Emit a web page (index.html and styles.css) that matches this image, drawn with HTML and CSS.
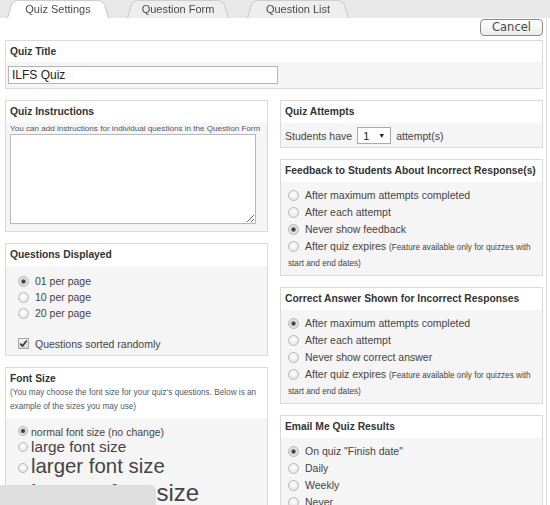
FILE: index.html
```html
<!DOCTYPE html>
<html lang="en">
<head>
    <meta charset="UTF-8">
    <title>Quiz Settings</title>
    <link rel="stylesheet" href="styles.css">
</head>
<body>
    <div class="tabs">
        <div class="tab active">Quiz Settings</div>
        <div class="tab">Question Form</div>
        <div class="tab">Question List</div>
    </div>

    <div class="page">
        <div class="toolbar">
            <button class="cancel">Cancel</button>
        </div>

        <div class="panel">
            <div class="panel-head title-head">Quiz Title</div>
            <div class="panel-body title-body">
                <input class="title-input" type="text" value="ILFS Quiz">
            </div>
        </div>

        <div class="columns">
            <div class="col">
                <div class="panel">
                    <div class="panel-head">Quiz Instructions</div>
                    <div class="panel-body instr-body">
                        <div class="hint instr-hint">You can add instructions for individual questions in the Question Form</div>
                        <textarea class="instr"></textarea>
                    </div>
                </div>

                <div class="panel">
                    <div class="panel-head">Questions Displayed</div>
                    <div class="panel-body list-body">
                        <label class="opt"><input type="radio" name="qd" checked>01 per page</label>
                        <label class="opt"><input type="radio" name="qd">10 per page</label>
                        <label class="opt"><input type="radio" name="qd">20 per page</label>
                        <label class="opt check-row"><span class="cb"><svg width="9" height="9" viewBox="0 0 9 9"><path d="M1.2 4.6 L3.5 7 L7.8 1.6" fill="none" stroke="#333" stroke-width="1.6"/></svg></span>Questions sorted randomly</label>
                    </div>
                </div>

                <div class="panel">
                    <div class="panel-head font-head">
                        <div>Font Size</div>
                        <div class="hint">(You may choose the font size for your quiz's questions. Below is an example of the sizes you may use)</div>
                    </div>
                    <div class="panel-body font-body">
                        <label class="opt fs-normal"><input type="radio" name="fs" checked>normal font size (no change)</label>
                        <label class="opt fs-large"><input type="radio" name="fs">large font size</label>
                        <label class="opt fs-larger"><input type="radio" name="fs">larger font size</label>
                        <label class="opt fs-largest"><input type="radio" name="fs">largest font size</label>
                    </div>
                </div>
            </div>

            <div class="col">
                <div class="panel">
                    <div class="panel-head">Quiz Attempts</div>
                    <div class="panel-body attempts-body">
                        <span>Students have</span>
                        <span class="select-wrap">
                            <select class="attempts">
                                <option>1</option>
                                <option>2</option>
                                <option>3</option>
                            </select>
                        </span>
                        <span>attempt(s)</span>
                    </div>
                </div>

                <div class="panel">
                    <div class="panel-head">Feedback to Students About Incorrect Response(s)</div>
                    <div class="panel-body radio-body">
                        <label class="opt"><input type="radio" name="fb">After maximum attempts completed</label>
                        <label class="opt"><input type="radio" name="fb">After each attempt</label>
                        <label class="opt"><input type="radio" name="fb" checked>Never show feedback</label>
                        <label class="opt note-row"><input type="radio" name="fb">After quiz expires <small>(Feature available only for quizzes with start and end dates)</small></label>
                    </div>
                </div>

                <div class="panel">
                    <div class="panel-head">Correct Answer Shown for Incorrect Responses</div>
                    <div class="panel-body radio-body">
                        <label class="opt"><input type="radio" name="ca" checked>After maximum attempts completed</label>
                        <label class="opt"><input type="radio" name="ca">After each attempt</label>
                        <label class="opt"><input type="radio" name="ca">Never show correct answer</label>
                        <label class="opt note-row"><input type="radio" name="ca">After quiz expires <small>(Feature available only for quizzes with start and end dates)</small></label>
                    </div>
                </div>

                <div class="panel">
                    <div class="panel-head">Email Me Quiz Results</div>
                    <div class="panel-body radio-body">
                        <label class="opt"><input type="radio" name="em" checked>On quiz "Finish date"</label>
                        <label class="opt"><input type="radio" name="em">Daily</label>
                        <label class="opt"><input type="radio" name="em">Weekly</label>
                        <label class="opt"><input type="radio" name="em">Never</label>
                    </div>
                </div>
            </div>
        </div>
    </div>

    <div class="status-bar"></div>
</body>
</html>
```

FILE: styles.css
```css
body {
    margin: 0;
    font-family: "Liberation Sans", Arial, sans-serif;
    font-size: 10.5px;
    color: #444;
    background-color: #fff;
    overflow: hidden;
}
.tabs {
    height: 18px;
    background-color: #e8e8e8;
    display: flex;
    padding-left: 7px;
    gap: 18px;
}
.tab {
    position: relative;
    z-index: 0;
    width: 102px;
    height: 18px;
    line-height: 19px;
    text-align: center;
    font-size: 11px;
    color: #4a4a4a;
}
.tab::before {
    content: '';
    position: absolute;
    top: -2px;
    left: 0;
    right: 0;
    bottom: 0;
    z-index: -1;
    background-color: #eeeeee;
    border: 1px solid #c6c6c6;
    border-bottom: none;
    border-radius: 6px 6px 0 0;
    transform: perspective(20px) rotateX(7deg);
    transform-origin: bottom;
}
.tab.active::before {
    background-color: #fff;
}
.page {
    width: 547px;
    box-sizing: border-box;
    padding: 0 3px 40px 5px;
    border-right: 1px solid #ddd;
}
.toolbar {
    display: flex;
    justify-content: flex-end;
    padding-top: 1px;
    margin-bottom: 4px;
}
.cancel {
    height: 17px;
    width: 63px;
    padding: 0;
    font-family: "DejaVu Sans", Verdana, sans-serif;
    font-size: 11.5px;
    line-height: 15px;
    color: #4a4a4a;
    background: linear-gradient(#fff, #ececec);
    border: 1px solid #8a8a8a;
    border-radius: 4px;
}
.panel {
    border: 1px solid #dadada;
    margin-bottom: 11px;
    background-color: #fff;
}
.panel-head {
    height: 22px;
    line-height: 22px;
    padding: 0 4px;
    font-weight: bold;
    font-size: 10.3px;
    color: #333;
}
.title-head {
    height: 21px;
    line-height: 21px;
}
.panel-body {
    background-color: #f5f5f5;
    padding: 0 4px;
}
.title-body {
    padding: 4px 2px 4px;
}
.title-input {
    display: block;
    width: 270px;
    height: 18px;
    box-sizing: border-box;
    padding: 0 3px;
    border: 1px solid #b5b5b5;
    font-family: "Liberation Sans", Arial, sans-serif;
    font-size: 12px;
    color: #222;
    background-color: #fff;
}
.columns {
    display: flex;
    gap: 12px;
}
.col {
    flex: 1;
    min-width: 0;
}
.hint {
    font-size: 8.2px;
    line-height: 14px;
    color: #4f5b66;
    font-weight: normal;
}
.instr-hint {
    font-size: 8.1px;
    line-height: 10px;
    white-space: nowrap;
}
.instr-body {
    padding: 1px 4px 7px;
}
.instr {
    display: block;
    width: 246px;
    height: 90px;
    box-sizing: border-box;
    border: 1px solid #b8b8b8;
    background-color: #fff;
    resize: both;
}
.opt {
    display: block;
    line-height: 17px;
    padding-left: 8px;
    color: #444;
}
.opt input[type="radio"] {
    appearance: none;
    -webkit-appearance: none;
    width: 11px;
    height: 11px;
    margin: 0 6px 0 0;
    vertical-align: -2px;
    border: 1px solid #b8b8b8;
    border-radius: 50%;
    background: radial-gradient(circle at 50% 40%, #fcfcfc 15%, #dcdcdc 100%);
}
.opt input[type="radio"]:checked {
    background: radial-gradient(circle, #333 0, #555 1.8px, #e4e4e4 2.6px, #d2d2d2 100%);
}
.opt small {
    font-size: 8.2px;
}
.note-row {
    line-height: 15px;
    margin-top: 1px;
}
.list-body {
    padding: 7px 4px 3px;
}
.list-body .opt {
    line-height: 16px;
}
.check-row {
    margin-top: 15px;
}
.cb {
    display: inline-block;
    width: 9px;
    height: 9px;
    margin-right: 6px;
    vertical-align: -1px;
    border: 1px solid #a8a8a8;
    background: linear-gradient(#f4f4f4, #d8d8d8);
}
.cb svg {
    display: block;
}
.font-head {
    height: auto;
    line-height: 14px;
    padding: 4px 4px 4px;
}
.font-body {
    padding-top: 7px;
}
.font-body .opt input[type="radio"] {
    width: 10px;
    height: 10px;
    margin-right: 3px;
    vertical-align: 0;
}
.fs-normal {
    font-size: 10.5px;
    line-height: 14px;
}
.fs-large {
    font-size: 15.3px;
    line-height: 16px;
}
.fs-larger {
    font-size: 20.4px;
    line-height: 23px;
}
.fs-largest {
    font-size: 24px;
    line-height: 30px;
}
.attempts-body {
    display: flex;
    align-items: center;
    gap: 5px;
    height: 17px;
    padding: 4px 4px 3px;
}
.select-wrap {
    position: relative;
    display: block;
    height: 17px;
}
.select-wrap::after {
    content: '\25BC';
    position: absolute;
    right: 6px;
    top: 0;
    font-size: 7px;
    line-height: 17px;
    color: #222;
    pointer-events: none;
}
.attempts {
    display: block;
    appearance: none;
    -webkit-appearance: none;
    width: 34px;
    height: 17px;
    padding: 0 0 0 5px;
    border: 1px solid #aaa;
    background-color: #fff;
    font-family: "Liberation Sans", Arial, sans-serif;
    font-size: 11px;
    color: #222;
}
.radio-body {
    padding: 5px 4px 4px 0;
}
.radio-body .opt {
    padding-left: 7px;
}
.status-bar {
    position: fixed;
    left: 0;
    bottom: 0;
    width: 156px;
    height: 20px;
    background-color: #dedede;
    border-top-right-radius: 6px;
}
```
